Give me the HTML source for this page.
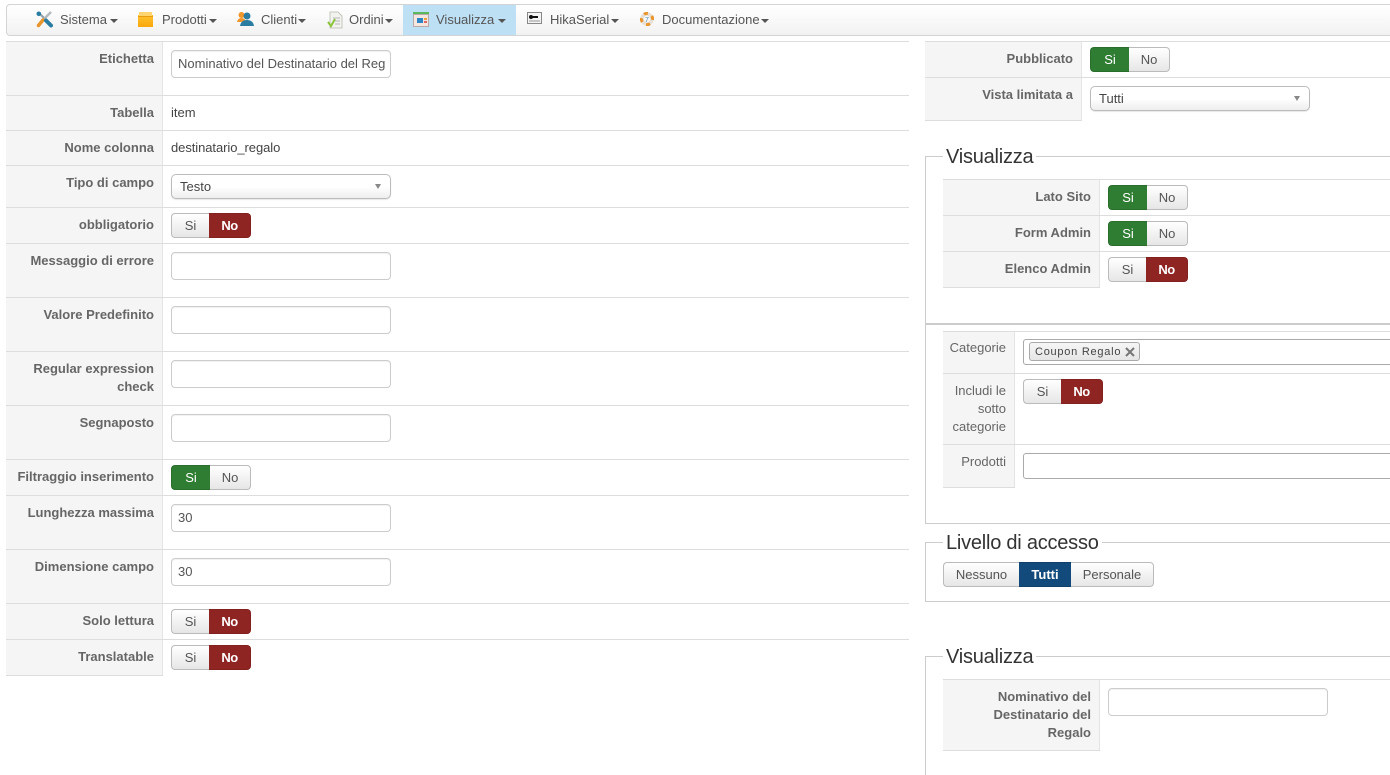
<!DOCTYPE html>
<html lang="it"><head><meta charset="utf-8"><title>Campo</title>
<style>
html,body{margin:0;padding:0;background:#fff;overflow:hidden;}
body{position:relative;width:1390px;height:775px;overflow:hidden;font-family:"Liberation Sans",sans-serif;font-size:13px;color:#555;}
div,span,svg{position:absolute;box-sizing:border-box;}
.nav{left:6px;top:4px;width:1390px;height:32px;border:1px solid #d4d4d4;border-radius:4px 0 0 4px;background:linear-gradient(#fff,#f2f2f2);}
.n{top:4px;height:32px;line-height:31px;white-space:nowrap;color:#555;}
.c{top:19px;width:0;height:0;border-left:4px solid transparent;border-right:4px solid transparent;border-top:4px solid #555;}
.h{height:1px;background:#ddd;}
.lb{background:#f5f5f5;border-right:1px solid #e4e4e4;}
.l{text-align:right;font-weight:bold;color:#666;line-height:18px;white-space:nowrap;margin-top:1px;}
.r{text-align:right;color:#666;line-height:18px;margin-top:1px;}
.t{line-height:18px;color:#444;white-space:nowrap;margin-top:1px;}
.i{height:28px;border:1px solid #ccc;border-radius:4px;background:#fff;padding:0 6px;line-height:26px;color:#555;white-space:nowrap;overflow:hidden;box-shadow:inset 0 1px 1px rgba(0,0,0,.06);}
.s{height:25px;border:1px solid #bbb;border-radius:5px;background:linear-gradient(#fff 50%,#eee);padding-left:8px;line-height:23px;color:#444;box-shadow:0 1px 1px rgba(0,0,0,.1);}
.s:after{content:"";position:absolute;right:9px;top:9px;border-left:3.5px solid transparent;border-right:3.5px solid transparent;border-top:5px solid #888;}
.b{height:25px;line-height:24px;text-align:center;color:#555;border:1px solid #bbb;background:linear-gradient(#fff,#e6e6e6);}
.lft{border-radius:4px 0 0 4px;border-right:0;}
.rgt{border-radius:0 4px 4px 0;border-left:0;}
.g{background:#2f7d32;border-color:#2a6d2d;color:#fff;}
.d{background:#8f2522;border-color:#822120;color:#fff;font-weight:bold;letter-spacing:-.5px;}
.u{background:#134a7c;border-color:#103f6a;color:#fff;font-weight:bold;border-left:0;border-right:0;}
.leg{font-size:20px;line-height:24px;color:#333;background:#fff;padding:0 3px;left:943px;white-space:nowrap;letter-spacing:-.23px;margin-top:1px;}
.fs{left:925px;width:470px;border:1px solid #ccc;}
</style></head><body>

<div class="nav"></div>
<div style="left:403px;top:5px;width:113px;height:30px;background:#bde0f4"></div>

<svg style="left:36px;top:11px" width="18" height="17" viewBox="0 0 18 17"><path d="M3 2 L15 14" stroke="#8fa0a6" stroke-width="2"/><path d="M15 1 L7 9" stroke="#b4babd" stroke-width="2.500"/><path d="M7 9 L2.500 14.500" stroke="#e8952c" stroke-width="3.500" stroke-linecap="round"/><path d="M10 9.500 L15 14.500" stroke="#2a7ca0" stroke-width="4" stroke-linecap="round"/><circle cx="2.800" cy="2.800" r="2.300" fill="#2a7ca0"/></svg>
<span class="n" style="left:60px">Sistema</span><span class="c" style="left:110px"></span>

<svg style="left:138px;top:11px" width="16" height="17" viewBox="0 0 16 17"><defs><linearGradient id="bx" x1="0" y1="0" x2="0" y2="1"><stop offset="0" stop-color="#fdc22e"/><stop offset="1" stop-color="#f9a70c"/></linearGradient></defs><rect x="0" y="4" width="15" height="12" fill="url(#bx)"/><rect x="1" y="1" width="13" height="4" fill="#fdd470"/><rect x="0" y="5" width="15" height="1" fill="#e89a10"/></svg>
<span class="n" style="left:162px">Prodotti</span><span class="c" style="left:209px"></span>

<svg style="left:237px;top:11px" width="17" height="16" viewBox="0 0 17 16"><circle cx="4.500" cy="4" r="3" fill="#f0962a"/><path d="M0 11 Q1 7 4.500 7 Q8 7 9 11Z" fill="#f0962a"/><circle cx="10" cy="5" r="3.500" fill="#2a7ca0"/><path d="M3 15 Q4 9 10 9 Q16 9 17 15Z" fill="#2a7ca0"/></svg>
<span class="n" style="left:261px">Clienti</span><span class="c" style="left:298px"></span>

<svg style="left:327px;top:11px" width="16" height="18" viewBox="0 0 16 18"><path d="M3 1H11L15 5V17H3Z" fill="#f2f2ee" stroke="#c5c5bd"/><path d="M6 7H13M8 10H13M8 13H13" stroke="#b5b5b5"/><path d="M1 11L4 15L8 8" stroke="#8cc43c" stroke-width="2" fill="none"/></svg>
<span class="n" style="left:349px">Ordini</span><span class="c" style="left:385px"></span>

<svg style="left:413px;top:12px" width="16" height="15" viewBox="0 0 16 15"><rect x="0" y="0" width="16" height="2" fill="#5cb85c"/><rect x=".5" y="2.500" width="15" height="12" fill="#f5e6e0" stroke="#b9a9a9"/><rect x="4" y="6" width="6" height="5" fill="#2f86c5"/><rect x="11" y="6" width="3" height="2" fill="#e8a53c"/><rect x="11" y="9" width="3" height="2" fill="#d66"/></svg>
<span class="n" style="left:436px">Visualizza</span><span class="c" style="left:498px"></span>

<svg style="left:527px;top:12px" width="15" height="13" viewBox="0 0 15 13"><rect x=".5" y=".5" width="14" height="11" fill="#f4f4f4" stroke="#888"/><path d="M3 5H11" stroke="#111" stroke-width="2"/><circle cx="4" cy="5" r="2" fill="#111"/><path d="M2 9H13" stroke="#999"/></svg>
<span class="n" style="left:550px">HikaSerial</span><span class="c" style="left:611px"></span>

<svg style="left:640px;top:12px" width="14" height="14" viewBox="0 0 14 14"><circle cx="7" cy="7" r="5" fill="none" stroke="#e8e0d4" stroke-width="3.500"/><path d="M4 2.300A5.500 5.500 0 0 1 10 2.300M11.700 4A5.500 5.500 0 0 1 11.700 10M10 11.700A5.500 5.500 0 0 1 4 11.700M2.300 10A5.500 5.500 0 0 1 2.300 4" fill="none" stroke="#e8952c" stroke-width="3" stroke-dasharray="4 20"/><text x="5" y="10" font-size="7" fill="#4a8ab5" font-family="Liberation Sans">7</text></svg>
<span class="n" style="left:662px">Documentazione</span><span class="c" style="left:761px"></span>

<!-- left table -->
<div class="lb" style="left:6px;top:41px;width:157px;height:635px"></div>
<div class="h" style="left:6px;top:41px;width:903px"></div>
<div class="h" style="left:6px;top:95px;width:903px"></div>
<div class="h" style="left:6px;top:130px;width:903px"></div>
<div class="h" style="left:6px;top:165px;width:903px"></div>
<div class="h" style="left:6px;top:207px;width:903px"></div>
<div class="h" style="left:6px;top:243px;width:903px"></div>
<div class="h" style="left:6px;top:297px;width:903px"></div>
<div class="h" style="left:6px;top:351px;width:903px"></div>
<div class="h" style="left:6px;top:405px;width:903px"></div>
<div class="h" style="left:6px;top:459px;width:903px"></div>
<div class="h" style="left:6px;top:495px;width:903px"></div>
<div class="h" style="left:6px;top:549px;width:903px"></div>
<div class="h" style="left:6px;top:603px;width:903px"></div>
<div class="h" style="left:6px;top:639px;width:903px"></div>
<div class="h" style="left:6px;top:675px;width:157px"></div>

<div class="l" style="left:6px;width:148px;top:49px">Etichetta</div>
<div class="l" style="left:6px;width:148px;top:103px">Tabella</div>
<div class="l" style="left:6px;width:148px;top:138px">Nome colonna</div>
<div class="l" style="left:6px;width:148px;top:173px">Tipo di campo</div>
<div class="l" style="left:6px;width:148px;top:215px">obbligatorio</div>
<div class="l" style="left:6px;width:148px;top:251px">Messaggio di errore</div>
<div class="l" style="left:6px;width:148px;top:305px">Valore Predefinito</div>
<div class="l" style="left:6px;width:148px;top:359px">Regular expression<br>check</div>
<div class="l" style="left:6px;width:148px;top:413px">Segnaposto</div>
<div class="l" style="left:6px;width:148px;top:467px">Filtraggio inserimento</div>
<div class="l" style="left:6px;width:148px;top:503px">Lunghezza massima</div>
<div class="l" style="left:6px;width:148px;top:557px">Dimensione campo</div>
<div class="l" style="left:6px;width:148px;top:611px">Solo lettura</div>
<div class="l" style="left:6px;width:148px;top:647px">Translatable</div>

<div class="i" style="left:171px;top:50px;width:220px">Nominativo del Destinatario del Reg</div>
<div class="t" style="left:171px;top:103px">item</div>
<div class="t" style="left:171px;top:138px;letter-spacing:-.07px">destinatario_regalo</div>
<div class="s" style="left:171px;top:174px;width:220px">Testo</div>
<div class="b lft" style="left:171px;top:213px;width:38px">Si</div><div class="b rgt d" style="left:209px;top:213px;width:42px">No</div>
<div class="i" style="left:171px;top:252px;width:220px"></div>
<div class="i" style="left:171px;top:306px;width:220px"></div>
<div class="i" style="left:171px;top:360px;width:220px"></div>
<div class="i" style="left:171px;top:414px;width:220px"></div>
<div class="b lft g" style="left:171px;top:465px;width:39px;border-right:0">Si</div><div class="b rgt" style="left:210px;top:465px;width:41px">No</div>
<div class="i" style="left:171px;top:504px;width:220px">30</div>
<div class="i" style="left:171px;top:558px;width:220px">30</div>
<div class="b lft" style="left:171px;top:609px;width:38px">Si</div><div class="b rgt d" style="left:209px;top:609px;width:42px">No</div>
<div class="b lft" style="left:171px;top:645px;width:38px">Si</div><div class="b rgt d" style="left:209px;top:645px;width:42px">No</div>

<!-- right top -->
<div class="lb" style="left:925px;top:41px;width:157px;height:79px"></div>
<div class="h" style="left:925px;top:41px;width:465px"></div>
<div class="h" style="left:925px;top:77px;width:465px"></div>
<div class="h" style="left:925px;top:120px;width:157px"></div>
<div class="l" style="left:925px;width:148px;top:49px">Pubblicato</div>
<div class="l" style="left:925px;width:148px;top:85px">Vista limitata a</div>
<div class="b lft g" style="left:1090px;top:47px;width:39px">Si</div><div class="b rgt" style="left:1129px;top:47px;width:41px">No</div>
<div class="s" style="left:1090px;top:86px;width:220px">Tutti</div>

<!-- fieldset Visualizza -->
<div class="fs" style="top:156px;height:169px;border-bottom:2px solid #ccc"></div>
<div class="fs" style="top:325px;height:199px;border-top:0"></div>
<div class="leg" style="top:144px">Visualizza</div>
<div class="lb" style="left:943px;top:179px;width:157px;height:109px"></div>
<div class="h" style="left:943px;top:179px;width:447px"></div>
<div class="h" style="left:943px;top:215px;width:447px"></div>
<div class="h" style="left:943px;top:251px;width:447px"></div>
<div class="h" style="left:943px;top:287px;width:157px"></div>
<div class="l" style="left:943px;width:148px;top:187px">Lato Sito</div>
<div class="l" style="left:943px;width:148px;top:223px">Form Admin</div>
<div class="l" style="left:943px;width:148px;top:259px">Elenco Admin</div>
<div class="b lft g" style="left:1108px;top:185px;width:39px">Si</div><div class="b rgt" style="left:1147px;top:185px;width:41px">No</div>
<div class="b lft g" style="left:1108px;top:221px;width:39px">Si</div><div class="b rgt" style="left:1147px;top:221px;width:41px">No</div>
<div class="b lft" style="left:1108px;top:257px;width:38px">Si</div><div class="b rgt d" style="left:1146px;top:257px;width:42px">No</div>

<!-- categorie -->
<div class="lb" style="left:943px;top:331px;width:72px;height:157px"></div>
<div class="h" style="left:943px;top:331px;width:447px"></div>
<div class="h" style="left:943px;top:373px;width:447px"></div>
<div class="h" style="left:943px;top:444px;width:447px"></div>
<div class="h" style="left:943px;top:487px;width:72px"></div>
<div class="r" style="left:943px;width:63px;top:338px">Categorie</div>
<div class="r" style="left:943px;width:63px;top:381px">Includi le<br>sotto<br>categorie</div>
<div class="r" style="left:943px;width:63px;top:452px">Prodotti</div>
<div style="left:1023px;top:339px;width:380px;height:26px;border:1px solid #aaa;border-radius:3px"></div>
<div style="left:1029px;top:342px;width:111px;height:19px;border:1px solid #aaa;border-radius:3px;background:linear-gradient(#f6f6f6,#e6e6e6);font-size:11px;letter-spacing:.75px;line-height:18px;padding-left:5px;color:#444;white-space:nowrap">Coupon Regalo</div>
<svg style="left:1125px;top:347px" width="10" height="10" viewBox="0 0 10 10"><path d="M1 1L9 9M9 1L1 9" stroke="#777" stroke-width="2"/></svg>
<div class="b lft" style="left:1023px;top:379px;width:38px">Si</div><div class="b rgt d" style="left:1061px;top:379px;width:42px">No</div>
<div style="left:1023px;top:453px;width:380px;height:26px;border:1px solid #aaa;border-radius:3px"></div>

<!-- livello -->
<div class="fs" style="top:542px;height:60px"></div>
<div class="leg" style="top:530px">Livello di accesso</div>
<div class="b lft" style="left:943px;top:562px;width:76px">Nessuno</div>
<div class="b u" style="left:1019px;top:562px;width:52px">Tutti</div>
<div class="b rgt" style="left:1071px;top:562px;width:83px">Personale</div>

<!-- visualizza 2 -->
<div class="fs" style="top:656px;height:119px;border-bottom:0"></div>
<div class="leg" style="top:644px">Visualizza</div>
<div class="lb" style="left:943px;top:679px;width:157px;height:72px"></div>
<div class="h" style="left:943px;top:679px;width:447px"></div>
<div class="h" style="left:943px;top:750px;width:157px"></div>
<div class="l" style="left:943px;width:148px;top:687px">Nominativo del<br>Destinatario del<br>Regalo</div>
<div class="i" style="left:1108px;top:688px;width:220px"></div>

</body></html>
